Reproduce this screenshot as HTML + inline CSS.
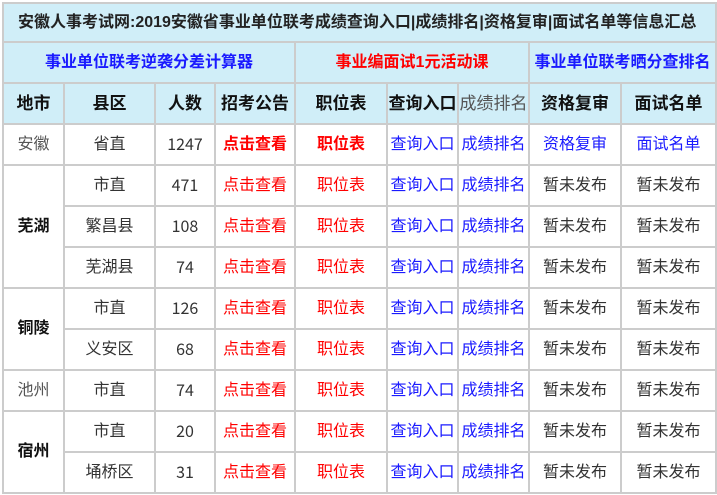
<!DOCTYPE html><html><head><meta charset="utf-8"><style>
body{margin:0;background:#fff;font-family:"Liberation Sans","Noto Sans CJK SC",sans-serif;}
table{position:absolute;left:2px;top:2px;border-collapse:collapse;table-layout:fixed;width:713px;}
td{border:2px solid #ccc;text-align:center;font-size:16px;color:#333;height:39px;padding:0;white-space:nowrap;overflow:hidden;line-height:20px;vertical-align:middle}
.c{background:#d0eef8}
.t{font-size:16px;font-weight:bold;text-align:left;padding-left:14px;color:#222;height:37px}
.h td{font-weight:bold;color:#111;font-size:17px}
.b{color:#1a1aff}.r{color:#f00}.rb{color:#f00;font-weight:bold}.g{color:#555}
.k{color:#111;font-weight:bold}
.n{font-family:"Noto Sans CJK SC",sans-serif}
.n span{position:relative;top:-2px}
</style></head><body>
<table>
<col style="width:61px"><col style="width:91px"><col style="width:60px"><col style="width:80px"><col style="width:92px"><col style="width:71px"><col style="width:71px"><col style="width:92px"><col style="width:95px">
<tr><td colspan="9" class="c t">安徽人事考试网:2019安徽省事业单位联考成绩查询入口|成绩排名|资格复审|面试名单等信息汇总</td></tr>
<tr class="c"><td colspan="4" class="c b" style="font-weight:bold">事业单位联考逆袭分差计算器</td><td colspan="3" class="c rb">事业编面试1元活动课</td><td colspan="2" class="c b" style="font-weight:bold">事业单位联考晒分查排名</td></tr>
<tr class="h c"><td class="c">地市</td><td class="c">县区</td><td class="c">人数</td><td class="c">招考公告</td><td class="c">职位表</td><td class="c">查询入口</td><td class="c" style="font-weight:normal;color:#555">成绩排名</td><td class="c">资格复审</td><td class="c">面试名单</td></tr>
<tr><td class="g">安徽</td><td>省直</td><td class="n"><span>1247</span></td><td class="rb">点击查看</td><td class="rb">职位表</td><td class="b">查询入口</td><td class="b">成绩排名</td><td class="b">资格复审</td><td class="b">面试名单</td></tr>
<tr><td rowspan="3" class="k">芜湖</td><td>市直</td><td class="n"><span>471</span></td><td class="r">点击查看</td><td class="r">职位表</td><td class="b">查询入口</td><td class="b">成绩排名</td><td>暂未发布</td><td>暂未发布</td></tr>
<tr><td>繁昌县</td><td class="n"><span>108</span></td><td class="r">点击查看</td><td class="r">职位表</td><td class="b">查询入口</td><td class="b">成绩排名</td><td>暂未发布</td><td>暂未发布</td></tr>
<tr><td>芜湖县</td><td class="n"><span>74</span></td><td class="r">点击查看</td><td class="r">职位表</td><td class="b">查询入口</td><td class="b">成绩排名</td><td>暂未发布</td><td>暂未发布</td></tr>
<tr><td rowspan="2" class="k">铜陵</td><td>市直</td><td class="n"><span>126</span></td><td class="r">点击查看</td><td class="r">职位表</td><td class="b">查询入口</td><td class="b">成绩排名</td><td>暂未发布</td><td>暂未发布</td></tr>
<tr><td>义安区</td><td class="n"><span>68</span></td><td class="r">点击查看</td><td class="r">职位表</td><td class="b">查询入口</td><td class="b">成绩排名</td><td>暂未发布</td><td>暂未发布</td></tr>
<tr><td class="g">池州</td><td>市直</td><td class="n"><span>74</span></td><td class="r">点击查看</td><td class="r">职位表</td><td class="b">查询入口</td><td class="b">成绩排名</td><td>暂未发布</td><td>暂未发布</td></tr>
<tr><td rowspan="2" class="k">宿州</td><td>市直</td><td class="n"><span>20</span></td><td class="r">点击查看</td><td class="r">职位表</td><td class="b">查询入口</td><td class="b">成绩排名</td><td>暂未发布</td><td>暂未发布</td></tr>
<tr><td>埇桥区</td><td class="n"><span>31</span></td><td class="r">点击查看</td><td class="r">职位表</td><td class="b">查询入口</td><td class="b">成绩排名</td><td>暂未发布</td><td>暂未发布</td></tr>
</table>
</body></html>
